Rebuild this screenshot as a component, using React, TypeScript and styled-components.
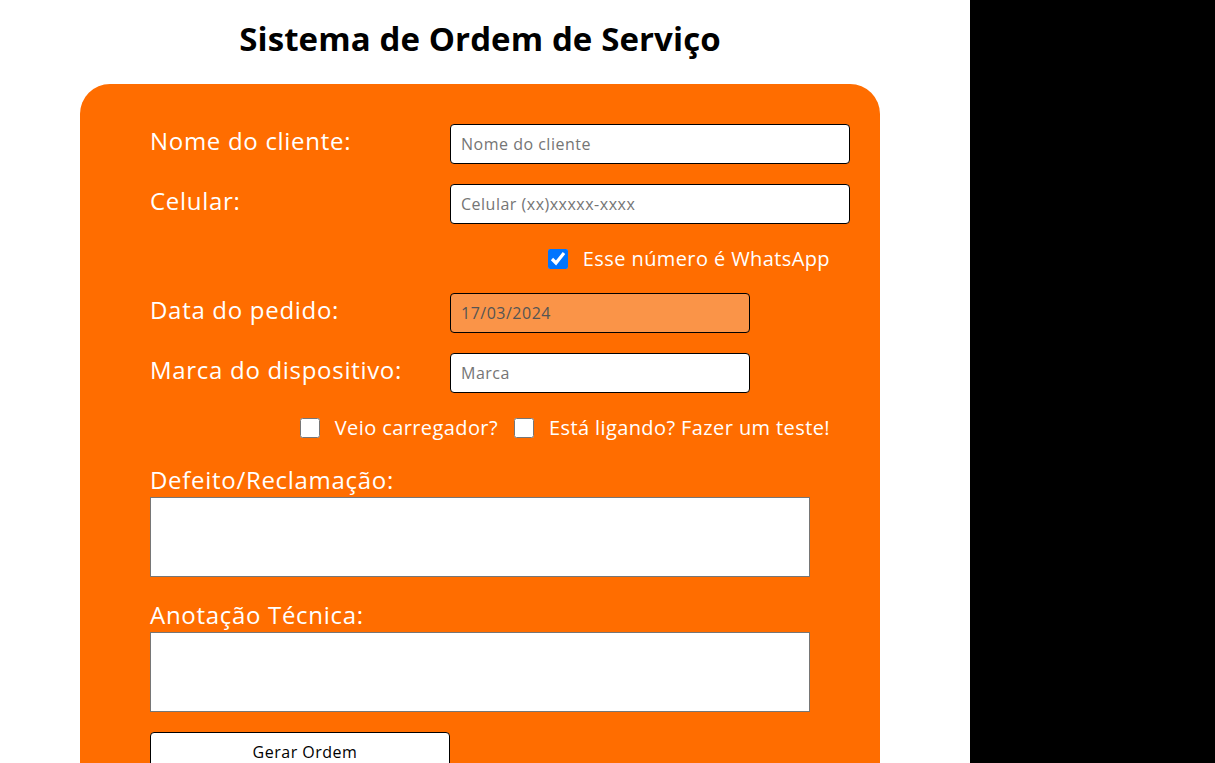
import React from 'react';
import styled, { createGlobalStyle } from 'styled-components';

const GlobalStyle = createGlobalStyle`
  html, body {
    margin: 0;
    padding: 0;
    height: 100%;
  }
  body {
    font-family: 'Open Sans', 'Liberation Sans', sans-serif;
    background: #000000;
  }
`;

const ORANGE = '#ff6d00';

const App = () => {
  return (
    <>
      <GlobalStyle />
      <Page>
        <Main>
          <Title>Sistema de Ordem de Serviço</Title>
          <Card>
            <FieldRow>
              <Label htmlFor="nome">Nome do cliente:</Label>
              <TextInput id="nome" placeholder="Nome do cliente" />
            </FieldRow>
            <FieldRow>
              <Label htmlFor="celular">Celular:</Label>
              <TextInput id="celular" placeholder="Celular (xx)xxxxx-xxxx" />
            </FieldRow>
            <CheckRow>
              <CheckItem>
                <Check type="checkbox" defaultChecked />
                Esse número é WhatsApp
              </CheckItem>
            </CheckRow>
            <FieldRow>
              <Label htmlFor="data">Data do pedido:</Label>
              <TextInput id="data" value="17/03/2024" readOnly short locked />
            </FieldRow>
            <FieldRow>
              <Label htmlFor="marca">Marca do dispositivo:</Label>
              <TextInput id="marca" placeholder="Marca" short />
            </FieldRow>
            <CheckRow>
              <CheckItem>
                <Check type="checkbox" />
                Veio carregador?
              </CheckItem>
              <CheckItem>
                <Check type="checkbox" />
                Está ligando? Fazer um teste!
              </CheckItem>
            </CheckRow>
            <AreaGroup>
              <Label htmlFor="defeito">Defeito/Reclamação:</Label>
              <TextArea id="defeito" />
            </AreaGroup>
            <AreaGroup>
              <Label htmlFor="anotacao">Anotação Técnica:</Label>
              <TextArea id="anotacao" />
            </AreaGroup>
            <SubmitButton type="button">Gerar Ordem</SubmitButton>
          </Card>
        </Main>
      </Page>
    </>
  );
};

export default App;

const Page = styled.div`
  display: grid;
  grid-template-columns: 970px 1fr;
  min-height: 100vh;
  background: #000000;
`;

const Main = styled.main`
  background: #ffffff;
  width: 960px;
  padding-right: 10px;
  min-height: 100vh;
`;

const Title = styled.h1`
  margin: 0;
  padding: 18px 0 24px;
  text-align: center;
  font-size: 33px;
  line-height: 42px;
  font-weight: 700;
  letter-spacing: 0.1px;
  color: #000000;
`;

const Card = styled.form`
  width: 800px;
  margin: 0 auto;
  box-sizing: border-box;
  background: ${ORANGE};
  border-radius: 30px;
  padding: 40px 30px 40px 70px;
  display: flex;
  flex-direction: column;
  gap: 20px;
`;

const FieldRow = styled.div`
  display: flex;
  align-items: flex-start;
`;

const Label = styled.label`
  width: 300px;
  flex-shrink: 0;
  color: #ffffff;
  font-size: 24px;
  line-height: 34px;
  font-weight: 400;
  letter-spacing: 0.7px;
`;

const TextInput = styled.input<{ short?: boolean; locked?: boolean }>`
  width: ${p => (p.short ? '300px' : '400px')};
  height: 40px;
  box-sizing: border-box;
  border: 1px solid #000000;
  border-radius: 4px;
  padding: 0 10px;
  font-family: inherit;
  font-size: 16px;
  letter-spacing: 0.5px;
  color: ${p => (p.locked ? '#545454' : '#000000')};
  background: ${p => (p.locked ? '#fa9448' : '#ffffff')};
  outline: none;

  &::placeholder {
    color: #757575;
  }
`;

const CheckRow = styled.div`
  display: flex;
  justify-content: flex-end;
  gap: 16px;
  padding-right: 20px;
`;

const CheckItem = styled.label`
  display: flex;
  align-items: center;
  gap: 15px;
  color: #ffffff;
  font-size: 20px;
  line-height: 29px;
  font-weight: 400;
  letter-spacing: 0.4px;
`;

const Check = styled.input`
  width: 20px;
  height: 20px;
  margin: 0;
  accent-color: #0075ff;
`;

const AreaGroup = styled.div`
  display: flex;
  flex-direction: column;
  align-items: flex-start;

  & > label {
    line-height: 35px;
  }
`;

const TextArea = styled.textarea`
  display: block;
  width: 660px;
  height: 80px;
  box-sizing: border-box;
  border: 1px solid #767676;
  border-radius: 0;
  resize: none;
  margin: 0;
`;

const SubmitButton = styled.button`
  width: 300px;
  height: 40px;
  padding: 0 0 0 10px;
  background: #ffffff;
  border: 1px solid #000000;
  border-radius: 4px;
  font-family: inherit;
  font-size: 16px;
  letter-spacing: 0.5px;
  color: #000000;
  cursor: pointer;
`;
